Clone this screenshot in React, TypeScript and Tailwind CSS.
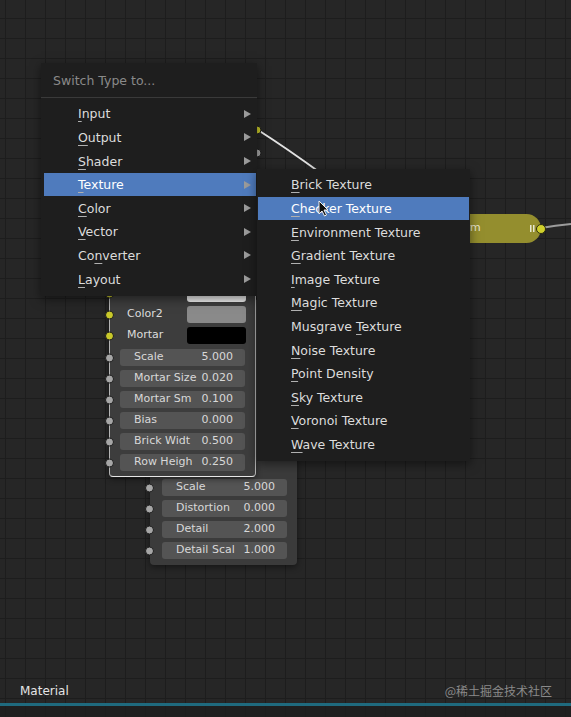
import React from 'react';

type MenuEntry = { label: string; key: number };

const MAIN_ITEMS: MenuEntry[] = [
  { label: 'Input', key: 0 },
  { label: 'Output', key: 0 },
  { label: 'Shader', key: 0 },
  { label: 'Texture', key: 0 },
  { label: 'Color', key: 0 },
  { label: 'Vector', key: 0 },
  { label: 'Converter', key: 2 },
  { label: 'Layout', key: 0 },
];

const TEXTURE_ITEMS: MenuEntry[] = [
  { label: 'Brick Texture', key: 0 },
  { label: 'Checker Texture', key: 0 },
  { label: 'Environment Texture', key: 0 },
  { label: 'Gradient Texture', key: 0 },
  { label: 'Image Texture', key: 0 },
  { label: 'Magic Texture', key: 0 },
  { label: 'Musgrave Texture', key: 9 },
  { label: 'Noise Texture', key: 0 },
  { label: 'Point Density', key: 0 },
  { label: 'Sky Texture', key: 0 },
  { label: 'Voronoi Texture', key: 0 },
  { label: 'Wave Texture', key: 0 },
];

const BRICK_FIELDS = [
  ['Scale', '5.000'],
  ['Mortar Size', '0.020'],
  ['Mortar Sm', '0.100'],
  ['Bias', '0.000'],
  ['Brick Widt', '0.500'],
  ['Row Heigh', '0.250'],
];

const WAVE_FIELDS = [
  ['Scale', '5.000'],
  ['Distortion', '0.000'],
  ['Detail', '2.000'],
  ['Detail Scal', '1.000'],
];

function Label({ label, u }: { label: string; u: number }) {
  return (
    <span className="pt-[2px]">
      {label.slice(0, u)}
      <span className="underline decoration-[#b0b0b0] decoration-1 underline-offset-[3px]">{label[u]}</span>
      {label.slice(u + 1)}
    </span>
  );
}

function Arrow() {
  return (
    <svg width="7" height="8" viewBox="0 0 7 8" className="shrink-0">
      <polygon points="0,0 7,4 0,8" fill="#9a9a9a" />
    </svg>
  );
}

function MenuRow({ item, active, arrow, pl }: { item: MenuEntry; active?: boolean; arrow?: boolean; pl: string }) {
  return (
    <div
      className={`flex h-[23.6px] items-center justify-between pr-[5px] ${pl} ${
        active ? 'bg-[#4f7bbd] text-white' : 'text-[#dcdcdc]'
      }`}
    >
      <Label label={item.label} u={item.key} />
      {arrow && <Arrow />}
    </div>
  );
}

function NodeSocket({ yellow, left }: { yellow?: boolean; left: string }) {
  return (
    <span
      className={`absolute ${left} top-1/2 h-[9px] w-[9px] -translate-y-1/2 rounded-full border border-[#1e1e1e] ${
        yellow ? 'bg-[#c9c92a]' : 'bg-[#a6a6a6]'
      }`}
    />
  );
}

function Field({ name, value }: { name: string; value: string }) {
  return (
    <div className="flex h-[17px] w-[125px] items-center justify-between rounded-[3px] bg-[#545454] pl-[14px] pr-[12px] text-[11px] text-[#d8d8d8]">
      <span>{name}</span>
      <span>{value}</span>
    </div>
  );
}

function ColorRow({ name, swatch }: { name: string; swatch: string }) {
  return (
    <div className="relative flex h-[21px] items-center">
      <NodeSocket yellow left="left-[-15px]" />
      <span className="ml-[7px] w-[60px] text-[11px] text-[#dcdcdc]">{name}</span>
      <span className={`h-[17px] w-[59px] rounded-[3px] ${swatch}`} />
    </div>
  );
}

export default function App() {
  const grid =
    'bg-[linear-gradient(to_right,#1d1d1d_1px,transparent_1px),linear-gradient(to_bottom,#1d1d1d_1px,transparent_1px)] bg-size-[20px_20px] bg-position-[5px_18px]';

  return (
    <div className="flex h-[717px] w-[571px] flex-col overflow-hidden bg-[#1e1e1e] font-['DejaVu_Sans',sans-serif]">
      <div className={`relative flex flex-1 flex-col justify-end bg-[#262626] ${grid}`}>
        {/* links */}
        <svg className="absolute inset-0" width="571" height="703">
          <path d="M258 130 C 280 144, 300 158, 322 174" stroke="#e2e2e2" strokeWidth="2" fill="none" />
          <path d="M541 228 C 552 226, 560 225, 571 224" stroke="#9c9c9c" strokeWidth="2" fill="none" />
          <circle cx="257" cy="130" r="4" fill="#c9c92a" stroke="#1e1e1e" />
          <circle cx="257" cy="153" r="4" fill="#a6a6a6" stroke="#1e1e1e" />
        </svg>

        {/* yellow node */}
        <div className="absolute left-[430px] top-[214px] flex h-[29px] w-[111px] items-center rounded-r-[15px] bg-[#948e2e] pl-[23px] text-[11px] text-[#ebe8cf]">
          <span>Form</span>
          <svg width="5" height="7" viewBox="0 0 5 7" className="ml-auto mr-[6px]">
            <rect x="0" y="0" width="1.5" height="7" fill="#e6e6d0" />
            <rect x="3" y="0" width="1.5" height="7" fill="#e6e6d0" />
          </svg>
          <span className="absolute right-[-5px] top-1/2 h-[10px] w-[10px] -translate-y-1/2 rounded-full border border-[#2a2a10] bg-[#d0d02c]" />
        </div>

        {/* wave texture node */}
        <div className="absolute left-[150px] top-[300px] flex h-[265px] w-[147px] flex-col justify-end rounded-[4px] bg-[#3b3b3b] pb-[4px] pl-[12px] shadow-[0_2px_6px_rgba(0,0,0,0.45)]">
          {WAVE_FIELDS.map(([n, v]) => (
            <div key={n} className="relative flex h-[21px] items-center">
              <NodeSocket left="left-[-17px]" />
              <Field name={n} value={v} />
            </div>
          ))}
        </div>

        {/* brick texture node */}
        <div className="absolute left-[109px] top-[272px] flex h-[205px] w-[147px] flex-col rounded-[4px] border border-[#b4b4b4] border-b-[#e6e6e6] bg-[#3d3d3d] pl-[10px] pt-[10px] shadow-[0_2px_6px_rgba(0,0,0,0.45)]">
          <ColorRow name="Color1" swatch="bg-[#f2f2f2]" />
          <ColorRow name="Color2" swatch="bg-[#8a8a8a]" />
          <ColorRow name="Mortar" swatch="bg-black" />
          <div className="mt-[1px] flex flex-col">
            {BRICK_FIELDS.map(([n, v]) => (
              <div key={n} className="relative flex h-[21px] items-center">
                <NodeSocket left="left-[-15px]" />
                <Field name={n} value={v} />
              </div>
            ))}
          </div>
        </div>

        {/* switch type menu */}
        <div className="absolute left-[41px] top-[63px] w-[216px] bg-[#1e1e1e] text-[12.5px] shadow-[0_3px_10px_rgba(0,0,0,0.5)]">
          <div className="flex h-[35px] items-center border-b border-[#3a3a3a] pl-[12px] pt-[2px] text-[#8a8a8a]">
            Switch Type to...
          </div>
          <div className="pb-[5px] pl-[3px] pr-[1px] pt-[4px]">
            {MAIN_ITEMS.map((it) => (
              <MenuRow key={it.label} item={it} arrow active={it.label === 'Texture'} pl="pl-[34px]" />
            ))}
          </div>
        </div>

        {/* texture submenu */}
        <div className="absolute left-[257px] top-[169px] w-[213px] bg-[#1e1e1e] px-[1px] pb-[5px] pt-[4px] text-[12.5px] shadow-[0_3px_10px_rgba(0,0,0,0.5)]">
          {TEXTURE_ITEMS.map((it) => (
            <MenuRow key={it.label} item={it} active={it.label === 'Checker Texture'} pl="pl-[33px]" />
          ))}
        </div>

        {/* cursor */}
        <svg className="absolute left-[318px] top-[200px]" width="11" height="17" viewBox="0 0 11 17">
          <path d="M1 1 L1 14 L4 11 L6.5 16 L8.5 15 L6 10 L10 10 Z" fill="#111" stroke="#f0f0f0" strokeWidth="1" strokeLinejoin="round" />
        </svg>

        <div className="flex items-end justify-between pb-[5px] pl-[20px] pr-[19px] text-[12px] leading-[14px]">
          <span className="text-[#e4e4e4]">Material</span>
          <span className="font-['Noto_Sans_CJK_SC',sans-serif] text-[#8a8a8a]">@稀土掘金技术社区</span>
        </div>
      </div>
      <div className="h-[3px] bg-[#1f6a7e]" />
      <div className={`h-[11px] bg-[#1f1f1f] ${grid}`} />
    </div>
  );
}
